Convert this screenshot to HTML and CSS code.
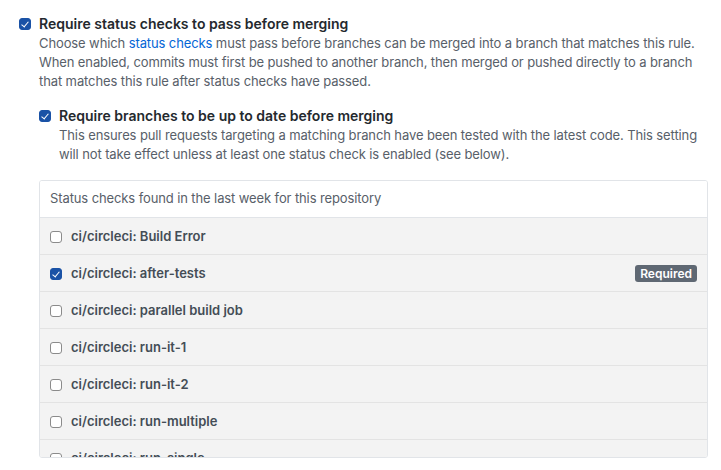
FILE: index.html
```html
<!DOCTYPE html>
<html lang="en">
<head>
<meta charset="utf-8">
<title>Branch protection – status checks</title>
<link rel="stylesheet" href="styles.css">
</head>
<body>
<div class="page">
  <div class="option">
    <input type="checkbox" class="cb" checked>
    <div class="option-body">
      <label class="option-title">Require status checks to pass before merging</label>
      <p class="note">Choose which <a href="#" class="link">status checks</a> must pass before branches can be merged into a branch that matches this rule. When enabled, commits must first be pushed to another branch, then merged or pushed directly to a branch that matches this rule after status checks have passed.</p>

      <div class="option sub">
        <input type="checkbox" class="cb" checked>
        <div class="option-body">
          <label class="option-title">Require branches to be up to date before merging</label>
          <p class="note">This ensures pull requests targeting a matching branch have been tested with the latest code. This setting will not take effect unless at least one status check is enabled (see below).</p>
        </div>
      </div>

      <div class="checks">
        <div class="checks-header">Status checks found in the last week for this repository</div>
        <div class="checks-list">
          <div class="check-row"><input type="checkbox" class="cb"><span>ci/circleci: Build Error</span></div>
          <div class="check-row"><input type="checkbox" class="cb" checked><span>ci/circleci: after-tests</span><span class="badge">Required</span></div>
          <div class="check-row"><input type="checkbox" class="cb"><span>ci/circleci: parallel build job</span></div>
          <div class="check-row"><input type="checkbox" class="cb"><span>ci/circleci: run-it-1</span></div>
          <div class="check-row"><input type="checkbox" class="cb"><span>ci/circleci: run-it-2</span></div>
          <div class="check-row"><input type="checkbox" class="cb"><span>ci/circleci: run-multiple</span></div>
          <div class="check-row"><input type="checkbox" class="cb"><span>ci/circleci: run-single</span></div>
        </div>
      </div>
    </div>
  </div>
</div>
</body>
</html>
```
FILE: styles.css
```css
html, body {
  margin: 0;
  background: #fff;
}

body {
  font-family: Inter, "Liberation Sans", sans-serif;
  color: #24292e;
}

.page {
  padding: 14px 13px 0 19px;
}

.option {
  display: flex;
  align-items: flex-start;
  gap: 8px;
}

.option > .cb {
  margin-top: 4px;
}

.option-body {
  flex: 1;
  min-width: 0;
}

.option-title {
  display: block;
  font-size: 14px;
  line-height: 20px;
  font-weight: 600;
  color: #24292e;
}

.note {
  margin: 0;
  font-size: 13px;
  line-height: 19px;
  letter-spacing: -0.11px;
  color: #586069;
}

.link {
  color: #0366d6;
  text-decoration: none;
}

.sub {
  margin-top: 15px;
}

.cb {
  appearance: none;
  -webkit-appearance: none;
  position: relative;
  flex: none;
  width: 12px;
  height: 12px;
  margin: 0;
  border: 1px solid #8b8b8b;
  border-radius: 3px;
  background: #fff;
}

.cb:checked {
  background: #1a52a6;
  border-color: #1a52a6;
}

.cb:checked::after {
  content: "";
  position: absolute;
  left: 3px;
  top: 0.5px;
  width: 3px;
  height: 6px;
  border: solid #fff;
  border-width: 0 1.6px 1.6px 0;
  transform: rotate(40deg);
}

.checks {
  margin-top: 16px;
  border: 1px solid #e1e4e8;
  border-radius: 3px;
  overflow: hidden;
}

.checks-header {
  padding: 8px 10px 9px;
  font-size: 13px;
  line-height: 19px;
  letter-spacing: -0.11px;
  color: #586069;
  background: #fff;
  border-bottom: 1px solid #e1e4e8;
}

.checks-list {
  max-height: 239px;
  overflow-y: auto;
  scrollbar-width: none;
  background: #f3f3f3;
}

.check-row {
  display: flex;
  align-items: center;
  gap: 9px;
  height: 36px;
  padding: 0 10px;
  border-bottom: 1px solid #e3e3e3;
  font-size: 13px;
  font-weight: 600;
  color: #444d56;
}

.check-row > .cb {
  margin-top: 2px;
}

.badge {
  margin-left: auto;
  padding: 0 5px;
  border-radius: 3px;
  background: #5f6873;
  color: #fff;
  font-size: 12px;
  line-height: 17px;
  font-weight: 600;
}
```
